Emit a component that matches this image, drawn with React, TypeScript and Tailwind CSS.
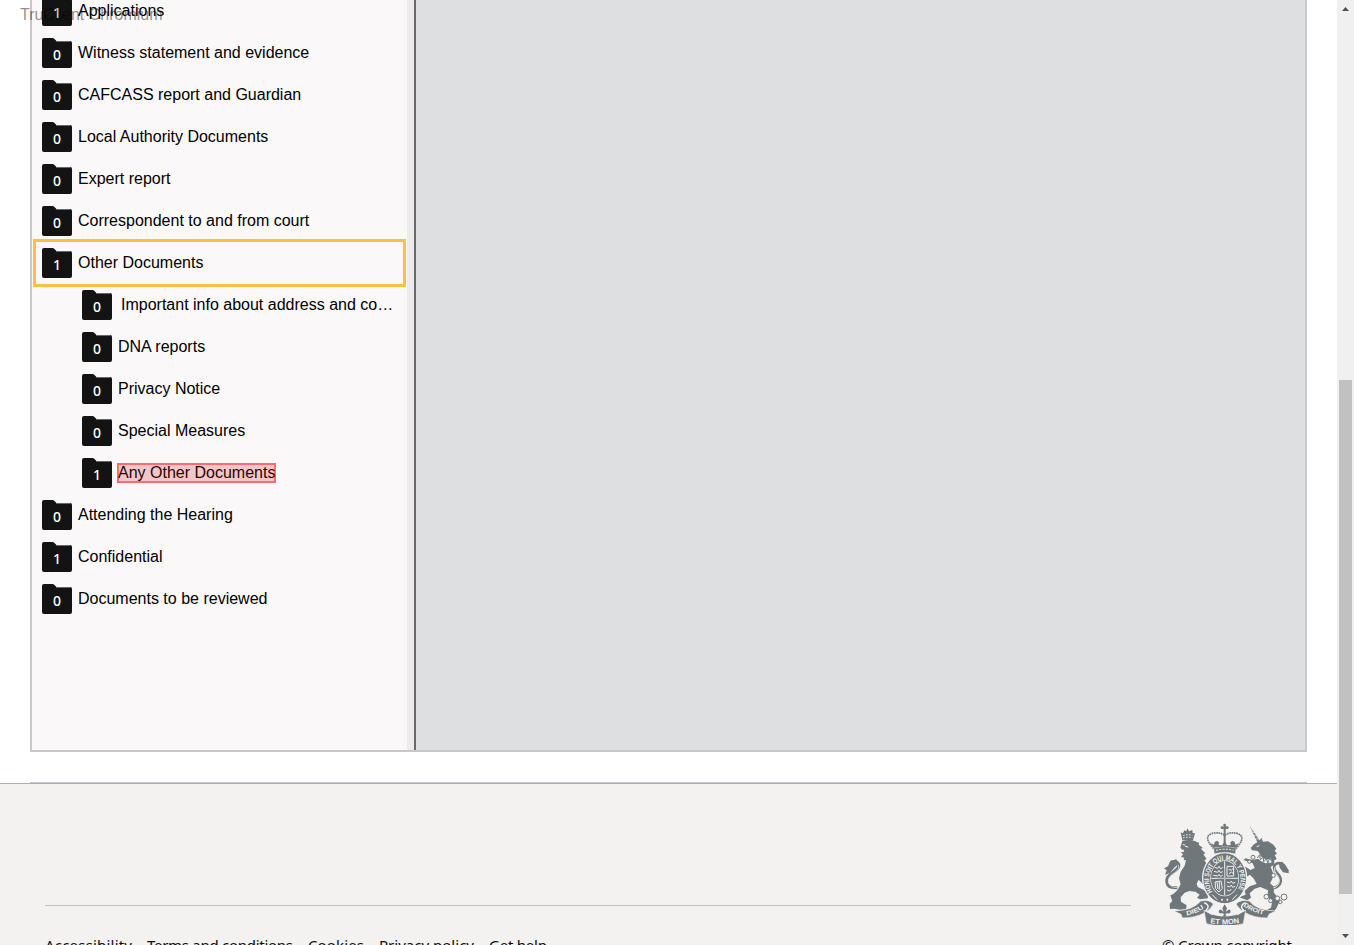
import React from "react";

type Node = { label: string; count: number; child?: boolean; focused?: boolean; marked?: boolean; indent?: boolean };

const nodes: Node[] = [
  { label: "Applications", count: 1 },
  { label: "Witness statement and evidence", count: 0 },
  { label: "CAFCASS report and Guardian", count: 0 },
  { label: "Local Authority Documents", count: 0 },
  { label: "Expert report", count: 0 },
  { label: "Correspondent to and from court", count: 0 },
  { label: "Other Documents", count: 1, focused: true },
  { label: "Important info about address and co…", count: 0, child: true, indent: true },
  { label: "DNA reports", count: 0, child: true },
  { label: "Privacy Notice", count: 0, child: true },
  { label: "Special Measures", count: 0, child: true },
  { label: "Any Other Documents", count: 1, child: true, marked: true },
  { label: "Attending the Hearing", count: 0 },
  { label: "Confidential", count: 1 },
  { label: "Documents to be reviewed", count: 0 },
];

const links = [
  { label: "Accessibility", width: 87 },
  { label: "Terms and conditions", width: 146 },
  { label: "Cookies", width: 56 },
  { label: "Privacy policy", width: 95 },
  { label: "Get help", width: 58 },
];

function Folder({ count }: { count: number }) {
  return (
    <span className="relative flex h-[30px] w-[30px] shrink-0 items-center justify-center">
      <svg className="absolute inset-0" width="30" height="30" viewBox="0 0 30 30">
        <path d="M2 0H10.5Q11.5 0 12.2 .8L14.5 3H28Q30 3 30 5V28Q30 30 28 30H2Q0 30 0 28V2Q0 0 2 0Z" fill="#131313" />
        <path d="M14 3.5H28" stroke="#666" strokeWidth="1" />
      </svg>
      <span className="relative mt-[3px] font-['Noto_Sans',sans-serif] text-[14px] font-medium leading-none text-white">{count}</span>
    </span>
  );
}

function TreeRow({ node }: { node: Node }) {
  return (
    <div className={`relative flex h-[42px] shrink-0 items-start ${node.child ? "pl-[50px]" : "pl-[10px]"}`}>
      <Folder count={node.count} />
      <span className={`relative whitespace-nowrap leading-[30px] ${node.indent ? "ml-[9px]" : "ml-[6px]"}`}>
        {node.label}
        {node.marked && <span className="absolute -left-px top-[5px] h-5 w-[159px] border-2 border-[#ff0000]/45 bg-[#d9000c]/20" />}
      </span>
      {node.focused && <span className="absolute -top-[9px] left-px h-12 w-[373px] border-[3px] border-[#ffbf47]" />}
    </div>
  );
}

function Crest() {
  return (
    <svg width="150" height="110" viewBox="0 0 450 330" fill="#6f777b" stroke="none">
      <defs>
        <path id="garter" d="M188 230A47 58 0 1 1 260 230" />
        <path id="leftMotto" d="M110 301Q143 296 168 274" />
        <path id="midMotto" d="M181 325Q224 332 270 323" />
        <path id="rightMotto" d="M280 273Q307 292 346 301" />
      </defs>
      {/* lion */}
      <path d="M97 76L92 52L99 55L103 46L109 49L112 40L117 49L127 45L128 54L135 55L129 76Z" />
      <path d="M99 62q13-5 28-1M99 69q13-4 28-1" stroke="#f3f2f1" strokeWidth="3" strokeDasharray="5 4" fill="none" />
      <path d="M97 78Q120 72 134 78L148 84L146 89L158 98L153 102L166 115L160 118L170 132L163 136L172 150L184 160L188 170L178 178L164 170L158 174L160 188L172 199L183 212L171 218L158 207L146 194L140 206L143 216L162 225L173 235L174 250L150 253L141 248L149 239L136 230L118 228L104 233L92 247L93 260L110 271L108 283L90 284L74 281L60 282L59 266L67 258L61 241L70 237L82 226L92 208L87 190L92 170L104 152L108 135L101 136L103 128L93 126L99 118L92 112L103 111L91 98Z" />
      <path d="M98 89l8 1M105 94l10 2" stroke="#f3f2f1" strokeWidth="3" />
      <path d="M91 104h12l-3 5h-9Z" fill="#f3f2f1" />
      <path d="M82 218C42 222 44 188 66 174C84 162 95 151 79 140" fill="none" stroke="#6f777b" strokeWidth="9" />
      <path d="M82 218C48 217 50 188 68 177C86 167 93 153 79 145" fill="none" stroke="#f3f2f1" strokeWidth="2" />
      <path d="M79 133L61 137L54 154L42 160L50 166L45 180L60 173L74 157L86 147Z" />

      {/* unicorn */}
      <path d="M299 33L330 78L323 84Z" />
      <path d="M302 43l7 2M306 51l8 2M311 61l9 2M317 71l9 2" stroke="#f3f2f1" strokeWidth="2" />
      <path d="M312 88L328 78L334 68L339 80L354 79L370 89L379 101L374 107L381 116L374 120L380 132L373 136L372 149L362 156L369 173L367 192L360 205L373 216L371 232L380 244L388 260L380 278L371 291L346 287L363 278L366 264L353 244L354 226L331 216L314 221L299 235L303 248L292 256L267 247L287 239L284 228L299 214L320 207L312 192L300 179L276 194L271 187L290 178L285 163L275 159L286 155L302 165L314 159L308 145L280 135L287 130L306 135L323 132L332 120L323 108L306 106L302 99Z" />
      <path d="M320 95l8-3" stroke="#f3f2f1" strokeWidth="3" />
      <path d="M323 123l12 10 13 6 16-2" fill="none" stroke="#f3f2f1" strokeWidth="11" />
      <path d="M322 129l7-10 2 15 9-8 1 14 9-9 3 13 5-12 9 6" fill="none" stroke="#6f777b" strokeWidth="3" />
      <g fill="none">
        <path d="M368 220C398 212 396 190 382 176C367 160 372 146 387 145C403 146 405 159 414 171" stroke="#6f777b" strokeWidth="9" />
        <path d="M370 219C393 211 391 190 380 179C370 167 373 153 386 149" stroke="#f3f2f1" strokeWidth="3" />
      </g>
      <path d="M386 143L396 140L406 150L409 164L418 175L399 172L389 158Z" />
      <g fill="none" stroke="#6f777b" strokeWidth="3">
        <circle cx="309" cy="127" r="6" fill="#f3f2f1" /><circle cx="298" cy="140" r="5" fill="#f3f2f1" />
        <circle cx="349" cy="245" r="7" fill="#f3f2f1" /><circle cx="362" cy="257" r="6" fill="#f3f2f1" />
        <circle cx="382" cy="250" r="7" fill="#f3f2f1" /><circle cx="402" cy="246" r="9" />
        <circle cx="391" cy="261" r="5" />
        <circle cx="370" cy="181" r="6" fill="#f3f2f1" />
      </g>

      {/* ring, shield and motto */}
      <ellipse cx="224" cy="190" rx="66" ry="77" stroke="#f3f2f1" strokeWidth="4" />
      <ellipse cx="224" cy="190" rx="43" ry="54" fill="#f3f2f1" />
      <text fill="#f3f2f1" fontFamily="Liberation Sans, sans-serif" fontSize="21" fontWeight="700"><textPath href="#garter" textLength="235" lengthAdjust="spacingAndGlyphs">HONI SOIT QUI MAL Y PENSE</textPath></text>
      <ellipse cx="224" cy="190" rx="41" ry="52" />
      <path d="M224 139V241M184 190H264" stroke="#f3f2f1" strokeWidth="3" />
      <g fill="none" stroke="#f3f2f1" strokeWidth="3">
        <path d="M194 157l9 3 4-6 4 7 7-3M192 169l11 3 4-6 4 7 7-3M190 181l13 2 4-5 4 6 7-3" />
        <path d="M231 154h20v29h-20zM236 163l8 3 5-6M237 176l7-5 7 5" />
        <path d="M195 201l18-3 4 22-10 11-10-10zM201 202l3 20M208 201v23" />
        <path d="M231 201l8 3 5-6 4 7 8-3M231 213l8 3 5-6 4 7 7-3M231 225l8 3 5-6" />
      </g>
      <path d="M224 160v64M202 190h44" stroke="#a9aeb0" strokeWidth="2" />
      <path d="M187 239l14 15M247 254l14-15" stroke="#f3f2f1" strokeWidth="3" />
      <circle cx="216" cy="254" r="3" fill="#f3f2f1" /><circle cx="232" cy="254" r="3" fill="#f3f2f1" />

      {/* crown */}
      <circle cx="224" cy="30" r="4" /><circle cx="216" cy="38" r="4" /><circle cx="232" cy="38" r="4" /><path d="M221 30h6v27h-6zM215 35h18v6h-18z" />
      <path d="M191 101L183 91Q162 65 184 56Q207 49 224 61Q241 49 264 56Q286 65 266 91L258 101" fill="none" stroke="#6f777b" strokeWidth="5" strokeDasharray="5 2" />
      <path d="M224 58V96" fill="none" stroke="#6f777b" strokeWidth="6" />
      <path d="M190 99L182 85L192 89L194 81L201 77L207 82L206 90L217 91L224 78L231 91L242 90L241 82L247 77L254 81L256 89L266 85L258 99Q224 92 190 99Z" />
      <path d="M191 99Q224 91 258 99L256 116Q224 107 193 116Z" stroke="#f3f2f1" strokeWidth="1" />
      <path d="M198 106Q224 99 251 106" stroke="#f3f2f1" strokeWidth="3" strokeDasharray="6 4" fill="none" />

      {/* ribbon */}
      <path d="M72 288Q130 286 152 258Q178 252 190 267Q182 284 164 293Q136 309 97 309L93 298Z" stroke="#f3f2f1" strokeWidth="2" />
      <path d="M377 288Q319 286 298 258Q271 252 258 267Q268 284 286 293Q312 309 352 309L357 298Z" stroke="#f3f2f1" strokeWidth="2" />
      <path d="M162 286Q191 304 224 304Q257 304 287 286L280 326Q225 342 169 326Z" stroke="#f3f2f1" strokeWidth="2" />
      <path d="M162 263q22 9 5 24l21 12M287 263q-22 9-5 24l-21 12" fill="none" stroke="#f3f2f1" strokeWidth="4" />
      <g fill="#f3f2f1" fontFamily="Liberation Sans, sans-serif" fontWeight="700">
        <text fontSize="19"><textPath href="#leftMotto" textLength="57" lengthAdjust="spacingAndGlyphs">DIEU</textPath></text>
        <text fontSize="22"><textPath href="#midMotto" textLength="88" lengthAdjust="spacingAndGlyphs">ET MON</textPath></text>
        <text fontSize="19"><textPath href="#rightMotto" textLength="65" lengthAdjust="spacingAndGlyphs">DROIT</textPath></text>
      </g>
      <path d="M224 268l7 12-4 11q12-14 15-2 1 7-8 6-7-1-8 3l4 7h-12l4-7q-1-4-8-3-9 1-8-6 3-12 15 2l-4-11Z" />
    </svg>
  );
}

export default function App() {
  return (
    <div className="flex h-[945px] w-[1354px] overflow-hidden bg-white font-['Liberation_Sans',Arial,sans-serif] text-base text-black">
      <main className="relative flex w-[1337px] shrink-0 flex-col">
        <div className="mx-[30px] flex h-[752px] shrink-0 border-2 border-t-0 border-[#c8c8ca]">
          <div className="-mt-1 flex w-[375px] shrink-0 flex-col bg-[#faf8f9]">
            {nodes.map((node) => <TreeRow key={node.label} node={node} />)}
          </div>
          <div className="w-[7px] shrink-0 bg-[#ececec]" />
          <div className="w-[2px] shrink-0 bg-[#69696b]" />
          <div className="grow bg-[#dedfe1]" />
        </div>
        <div className="mx-[30px] mt-[30px] h-px shrink-0 bg-[#c5c6c8]" />
        <footer className="flex grow flex-col border-t border-[#a9b0b4] bg-[#f3f2f1] text-[#0b0c0c]">
          <div className="flex h-[152px] justify-between pl-[45px] pr-[37px]">
            <div className="mt-[121px] h-px w-[1086px] bg-[#bfc1c3]" />
            <div className="mt-[31px]"><Crest /></div>
          </div>
          <div className="flex h-[9px] justify-between overflow-visible pl-[45px] pr-[45px] font-['Noto_Sans',sans-serif] text-[15px] leading-5">
            <div className="flex gap-[15px]">
              {links.map((link) => (
                <svg key={link.label} width={link.width} height="20" className="shrink-0 overflow-visible">
                  <text x="0" y="15" textLength={link.width} fill="#0b0c0c">{link.label}</text>
                </svg>
              ))}
            </div>
            <svg width="130" height="20" className="shrink-0 overflow-visible"><text x="0" y="15" textLength="130" fill="#0b0c0c">© Crown copyright</text></svg>
          </div>
        </footer>
        <span className="absolute left-5 top-[6px] leading-[18px] text-black/45">TruClient Chromium</span>
      </main>
      <aside className="flex w-[17px] shrink-0 flex-col items-center bg-[#f0f0f0]">
        <svg width="17" height="17" className="shrink-0"><path d="M5 11h7l-3.5-4z" fill="#505050" /></svg>
        <div className="mt-[363px] h-[514px] w-[13px] shrink-0 bg-[#c1c1c1]" />
        <svg width="17" height="17" className="mt-[34px] shrink-0"><path d="M5 6h7l-3.5 4z" fill="#505050" /></svg>
      </aside>
    </div>
  );
}
